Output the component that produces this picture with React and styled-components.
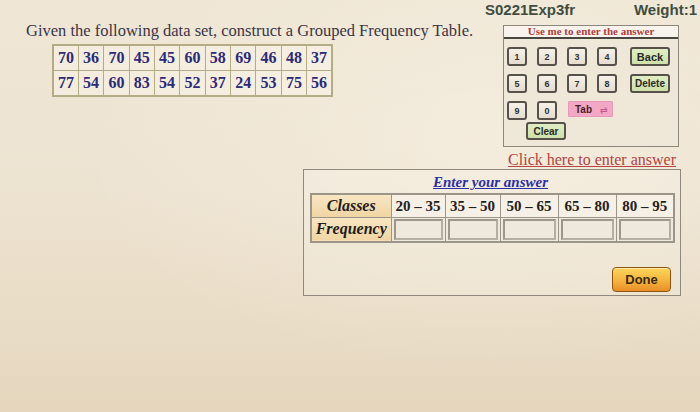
import React from 'react'
import styled, { createGlobalStyle } from 'styled-components'

const dataRows = [
  [70, 36, 70, 45, 45, 60, 58, 69, 46, 48, 37],
  [77, 54, 60, 83, 54, 52, 37, 24, 53, 75, 56],
];

const classes = ['20 – 35', '35 – 50', '50 – 65', '65 – 80', '80 – 95'];
const classWidths = [54, 55, 58, 58, 58];

const GlobalStyle = createGlobalStyle`
  html, body {
    margin: 0;
    padding: 0;
  }
  body {
    font-family: "Liberation Serif", "Times New Roman", serif;
  }
`

const App = () => {
  return (
    <>
      <GlobalStyle />
      <Page>
        <TopRow>
          <Question>
            <Prompt>Given the following data set, construct a Grouped Frequency Table.</Prompt>
            <DataTable>
              <tbody>
                {dataRows.map((row, i) => (
                  <tr key={i}>
                    {row.map((n, j) => <DataCell key={j}>{n}</DataCell>)}
                  </tr>
                ))}
              </tbody>
            </DataTable>
          </Question>

          <Side>
            <Meta>
              <span>S0221Exp3fr</span>
              <span>Weight:1</span>
            </Meta>

            <KeyPad>
              <PadHead>Use me to enter the answer</PadHead>
              <KeyGrid>
                <Key>1</Key>
                <Key>2</Key>
                <Key>3</Key>
                <Key>4</Key>
                <ActionKey $size={11}>Back</ActionKey>
                <Key>5</Key>
                <Key>6</Key>
                <Key>7</Key>
                <Key>8</Key>
                <ActionKey $size={10}>Delete</ActionKey>
                <Key>9</Key>
                <Key>0</Key>
                <TabKey>Tab <TabArrow>⇄</TabArrow></TabKey>
              </KeyGrid>
              <ClearRow>
                <ActionKey $size={10} $wide>Clear</ActionKey>
              </ClearRow>
            </KeyPad>

            <EnterLink>Click here to enter answer</EnterLink>
          </Side>
        </TopRow>

        <AnswerPanel>
          <PanelTitle>Enter your answer</PanelTitle>
          <FreqTable>
            <colgroup>
              <col style={{ width: 80 }} />
              {classWidths.map((w, i) => <col key={i} style={{ width: w }} />)}
            </colgroup>
            <tbody>
              <HeadRow>
                <LabelCell>Classes</LabelCell>
                {classes.map((c) => <RangeCell key={c}>{c}</RangeCell>)}
              </HeadRow>
              <InputRow>
                <LabelCell>Frequency</LabelCell>
                {classes.map((c) => (
                  <InputCell key={c}><FreqInput type="text" aria-label={`Frequency ${c}`} /></InputCell>
                ))}
              </InputRow>
            </tbody>
          </FreqTable>
          <Footer>
            <DoneButton>Done</DoneButton>
          </Footer>
        </AnswerPanel>
      </Page>
    </>
  )
}

export default App

const Page = styled.div`
  width: 700px;
  height: 412px;
  box-sizing: border-box;
  overflow: hidden;
  background:
    radial-gradient(ellipse at 70% 35%, rgba(255, 250, 240, 0.35), rgba(255, 250, 240, 0) 60%),
    linear-gradient(180deg, #efe6d5 0%, #ede3d1 45%, #e9dcc6 80%, #e5d6bd 100%);
`

const TopRow = styled.div`
  display: flex;
  justify-content: space-between;
  padding-right: 3px;
`

const Question = styled.div`
  padding: 22px 0 0 26px;
`

const Prompt = styled.div`
  font-size: 16.5px;
  line-height: 18px;
  color: #3a3548;
  white-space: nowrap;
`

const DataTable = styled.table`
  margin: 4px 0 0 26px;
  width: 281px;
  table-layout: fixed;
  border-collapse: collapse;
  border: 2px solid #b3ac86;
`

const DataCell = styled.td`
  height: 24px;
  padding: 0;
  border: 1px solid #b3ac86;
  background: rgba(255, 252, 244, 0.35);
  text-align: center;
  font-size: 16px;
  font-weight: bold;
  color: #2d2a78;
`

const Side = styled.div`
  width: 213px;
  display: flex;
  flex-direction: column;
`

const Meta = styled.div`
  display: flex;
  justify-content: space-between;
  padding: 1px 0 0 1px;
  font-family: "Liberation Sans", Arial, sans-serif;
  font-size: 15px;
  font-weight: bold;
  line-height: 17px;
  color: #3e4d3f;
`

const KeyPad = styled.div`
  margin: 7px 0 0 19px;
  width: 176px;
  box-sizing: border-box;
  border: 1px solid #8d877c;
  background: #efe7d8;
  padding-bottom: 6px;
`

const PadHead = styled.div`
  height: 11px;
  line-height: 11px;
  border-bottom: 2px solid #4a4640;
  background: #f8f4ed;
  text-align: center;
  font-size: 11px;
  font-weight: bold;
  color: #b43c3c;
`

const KeyGrid = styled.div`
  display: grid;
  grid-template-columns: repeat(4, 20px) 43px;
  grid-auto-rows: 19px;
  column-gap: 10px;
  row-gap: 8px;
  padding: 8px 0 0 3px;
`

const Key = styled.button`
  box-sizing: border-box;
  width: 20px;
  height: 19px;
  padding: 0;
  border: 2px solid #56524b;
  border-radius: 3px;
  background: linear-gradient(180deg, #f6f1e8, #e5ddd0);
  font-family: "Liberation Sans", Arial, sans-serif;
  font-size: 9px;
  font-weight: bold;
  color: #333;
  cursor: pointer;
`

const ActionKey = styled(Key)`
  justify-self: end;
  width: 40px;
  height: ${({ $wide }) => ($wide ? 18 : 19)}px;
  background: linear-gradient(180deg, #e0edc4, #cfe0aa);
  font-size: ${({ $size }) => $size}px;
  color: #2a2a26;
`

const TabKey = styled.button`
  grid-column: 3 / span 2;
  align-self: start;
  box-sizing: border-box;
  width: 45px;
  height: 16px;
  margin-left: 1px;
  padding: 0 0 0 6px;
  border: 1px solid #e79bbb;
  border-radius: 1px;
  background: #f2a7c5;
  text-align: left;
  font-family: "Liberation Sans", Arial, sans-serif;
  font-size: 10px;
  font-weight: bold;
  color: #4b1a2c;
  word-spacing: 5px;
`

const TabArrow = styled.span`
  font-size: 9px;
  font-weight: normal;
  color: #c4588a;
`

const ClearRow = styled.div`
  display: flex;
  padding-left: 22px;
  margin-top: 2px;
`

const EnterLink = styled.a`
  display: block;
  margin-top: 4px;
  padding-right: 21px;
  text-align: right;
  font-size: 16px;
  line-height: 18px;
  color: #b3443f;
  text-decoration: underline;
  cursor: pointer;
`

const AnswerPanel = styled.div`
  margin-left: 303px;
  width: 378px;
  box-sizing: border-box;
  border: 1px solid #8f897e;
  padding: 3px 9px 3px 6px;
  background: rgba(255, 252, 245, 0.15);
`

const PanelTitle = styled.div`
  text-align: center;
  font-size: 15px;
  line-height: 18px;
  font-weight: bold;
  font-style: italic;
  color: #2b2fa6;
  text-decoration: underline;
  margin-bottom: 2px;
`

const FreqTable = styled.table`
  border-collapse: collapse;
  table-layout: fixed;
  width: 363px;
  border: 2px solid #9c968a;
`

const HeadRow = styled.tr`
  height: 23px;
`

const InputRow = styled.tr`
  height: 25px;
`

const LabelCell = styled.td`
  padding: 0;
  border: 1px solid #9c968a;
  background: linear-gradient(180deg, #f8e6c3, #f0d5a3);
  text-align: center;
  font-size: 16px;
  line-height: 18px;
  font-weight: bold;
  font-style: italic;
  color: #1f1d1a;
`

const RangeCell = styled.td`
  padding: 0;
  border: 1px solid #9c968a;
  background: #f6f0e6;
  text-align: center;
  font-size: 15px;
  line-height: 18px;
  font-weight: bold;
  color: #232120;
  white-space: nowrap;
`

const InputCell = styled.td`
  padding: 1px 2px;
  border: 1px solid #9c968a;
  background: #efe8dc;
`

const FreqInput = styled.input`
  display: block;
  width: 100%;
  height: 21px;
  box-sizing: border-box;
  margin: 0;
  padding: 0;
  border: 2px solid #b4aea3;
  border-top-color: #9c968b;
  border-left-color: #9c968b;
  background: #efe8dc;
`

const Footer = styled.div`
  display: flex;
  justify-content: flex-end;
  margin-top: 24px;
`

const DoneButton = styled.button`
  width: 59px;
  height: 25px;
  box-sizing: border-box;
  padding: 0;
  border: 1px solid #8d5512;
  border-radius: 4px;
  background: linear-gradient(180deg, #fbd65a 0%, #f5b33f 55%, #e98e26 100%);
  box-shadow: inset 0 1px 0 rgba(255, 255, 255, 0.45);
  font-family: "Liberation Sans", Arial, sans-serif;
  font-size: 13px;
  font-weight: bold;
  color: #3b2a12;
  cursor: pointer;
`
